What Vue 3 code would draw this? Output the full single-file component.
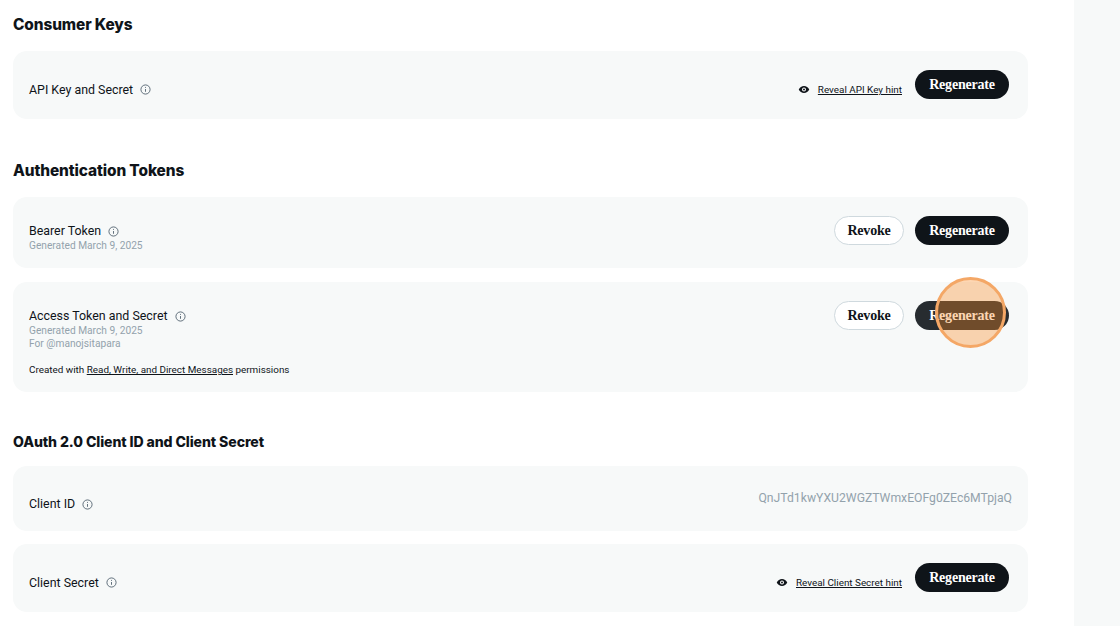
<script setup>
const eye = "M1 6c1.5-3 4-4.6 7-4.6S13.500 3 15 6c-1.500 3-4 4.600-7 4.600S2.500 9 1 6z";
</script>

<template>
  <div class="page">
    <main class="main">
      <h2 class="heading first">Consumer Keys</h2>
      <section class="card key-card">
        <div class="label-row low"><span class="label">API Key and Secret</span><svg class="info" viewBox="0 0 12 12"><circle cx="6" cy="6" r="5" /><path d="M6 5.500v3M6 3.200v1" /></svg></div>
        <div class="actions hint-actions">
          <span class="hint"><svg class="eye" viewBox="0 0 16 12"><path :d="eye" /><circle cx="8" cy="6" r="2.600" class="pupil" /><circle cx="8" cy="6" r="1.300" class="dot" /></svg><a>Reveal API Key hint</a></span>
          <button class="btn dark">Regenerate</button>
        </div>
      </section>

      <h2 class="heading second">Authentication Tokens</h2>
      <section class="card bearer-card">
        <div class="text-group">
          <div class="label-row"><span class="label">Bearer Token</span><svg class="info" viewBox="0 0 12 12"><circle cx="6" cy="6" r="5" /><path d="M6 5.500v3M6 3.200v1" /></svg></div>
          <div class="meta">Generated March 9, 2025</div>
        </div>
        <div class="actions raised"><button class="btn light">Revoke</button><button class="btn dark">Regenerate</button></div>
      </section>
      <section class="card access-card">
        <div>
          <div class="label-row"><span class="label">Access Token and Secret</span><svg class="info" viewBox="0 0 12 12"><circle cx="6" cy="6" r="5" /><path d="M6 5.500v3M6 3.200v1" /></svg></div>
          <div class="meta">Generated March 9, 2025</div>
          <div class="meta">For @manojsitapara</div>
          <div class="created">Created with <a>Read, Write, and Direct Messages</a> permissions</div>
        </div>
        <div class="actions"><button class="btn light">Revoke</button><button class="btn dark hovered">Regenerate</button></div>
        <span class="spot"></span>
      </section>

      <h2 class="heading third">OAuth 2.0 Client ID and Client Secret</h2>
      <section class="card id-card">
        <div class="label-row lower"><span class="label">Client ID</span><svg class="info" viewBox="0 0 12 12"><circle cx="6" cy="6" r="5" /><path d="M6 5.500v3M6 3.200v1" /></svg></div>
        <span class="client-id">QnJTd1kwYXU2WGZTWmxEOFg0ZEc6MTpjaQ</span>
      </section>
      <section class="card secret-card">
        <div class="label-row low"><span class="label">Client Secret</span><svg class="info" viewBox="0 0 12 12"><circle cx="6" cy="6" r="5" /><path d="M6 5.500v3M6 3.200v1" /></svg></div>
        <div class="actions hint-actions">
          <span class="hint"><svg class="eye" viewBox="0 0 16 12"><path :d="eye" /><circle cx="8" cy="6" r="2.600" class="pupil" /><circle cx="8" cy="6" r="1.300" class="dot" /></svg><a>Reveal Client Secret hint</a></span>
          <button class="btn dark">Regenerate</button>
        </div>
      </section>
    </main>
    <aside class="side"></aside>
  </div>
</template>

<style>
html, body { margin: 0; background: #fff; overflow: hidden; }
</style>

<style scoped>
.page {
  display: flex;
  width: 1120px;
  height: 626px;
  overflow: hidden;
  font-family: Roboto, "Liberation Sans", sans-serif;
  color: #0f1419;
}
.main { width: 1015px; padding: 0 46px 0 13px; flex: none; }
.side { flex: 1; background: #f7f9f9; }
.heading { margin: 0; font-family: Inter, sans-serif; font-size: 15.4px; line-height: 20px; font-weight: 800; letter-spacing: -0.1px; }
.first { padding-top: 15px; margin-bottom: 16px; }
.second { margin-top: 42px; margin-bottom: 16px; }
.third { margin-top: 40px; margin-bottom: 14px; font-size: 14.100px; }
.card {
  position: relative;
  display: flex;
  justify-content: space-between;
  background: #f7f9f9;
  border-radius: 14px;
  padding: 0 19px 0 16px;
  box-sizing: border-box;
}
.key-card { height: 68px; align-items: center; }
.bearer-card { height: 71px; align-items: center; margin-bottom: 14px; }
.access-card { height: 110px; padding-top: 25px; }
.id-card { height: 65px; align-items: center; margin-bottom: 13px; padding-right: 16px; }
.secret-card { height: 68px; align-items: center; }
.label-row { display: flex; align-items: center; gap: 7px; }
.low { margin-top: 8px; }
.lower { margin-top: 10px; }
.text-group { margin-top: 9px; }
.raised { margin-top: -4px; }
.label { font-size: 12.400px; line-height: 17px; }
.info { width: 11px; height: 11px; fill: none; stroke: #536471; stroke-width: 1; flex: none; margin-top: 1px; }
.meta { font-size: 10.200px; line-height: 13px; color: #93a2ac; }
.created { font-size: 9.900px; line-height: 13px; margin-top: 13px; }
a { text-decoration: underline; }
.actions { display: flex; align-items: center; gap: 11px; }
.hint-actions { gap: 13px; margin-top: -1px; }
.hint { display: flex; align-items: center; gap: 8px; font-size: 9.900px; margin-top: 10px; }
.eye { width: 12px; height: 9px; }
.eye path { fill: #0f1419; }
.pupil { fill: #fff; }
.dot { fill: #0f1419; }
.btn {
  height: 29px;
  border-radius: 15px;
  font-family: "Liberation Serif", serif;
  font-size: 14px;
  letter-spacing: -0.2px;
  font-weight: 700;
  padding: 0;
  box-sizing: border-box;
}
.dark { width: 94px; background: #0f1419; color: #fff; border: 0; }
.light { width: 70px; background: #fff; color: #0f1419; border: 1px solid #cfd9de; }
.hovered { background: #272c30; }
.access-card .actions { align-self: flex-start; margin-top: -6px; }
.client-id { font-size: 12.200px; color: #93a2ac; margin-top: -2px; }
.spot {
  position: absolute;
  left: 922px;
  top: -5px;
  width: 71px;
  height: 71px;
  box-sizing: border-box;
  border-radius: 50%;
  border: 3px solid #f4a766;
  background: rgba(249, 137, 34, 0.35);
}
</style>
